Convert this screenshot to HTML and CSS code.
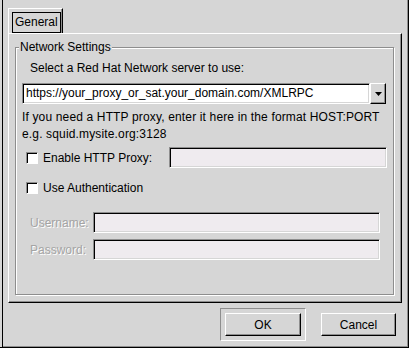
FILE: index.html
```html
<!DOCTYPE html>
<html lang="en">
<head>
  <meta charset="UTF-8">
  <title>Network Settings</title>
  <link rel="stylesheet" href="styles.css">
</head>
<body>
  <div class="dialog">
    <div class="notebook">
      <div class="tabs">
        <div class="tab"><span class="tab-focus">General</span></div>
      </div>
      <div class="page">
        <div class="frame">
          <span class="frame-label">Network Settings</span>

          <div class="select-label">Select a Red Hat Network server to use:</div>
          <div class="combo">
            <div class="entry combo-entry">https://your_proxy_or_sat.your_domain.com/XMLRPC</div>
            <div class="combo-btn">
              <svg width="9" height="6" viewBox="0 0 9 6"><path d="M1 1 H8 L4.5 5 Z" fill="#000"/></svg>
            </div>
          </div>

          <div class="info">
            <div>If you need a HTTP proxy, enter it here in the format HOST:PORT</div>
            <div>e.g. squid.mysite.org:3128</div>
          </div>

          <div class="row proxy-row">
            <span class="check"></span>
            <span class="check-text">Enable HTTP Proxy:</span>
            <div class="entry disabled proxy-entry"></div>
          </div>

          <div class="row auth-row">
            <span class="check"></span>
            <span class="check-text">Use Authentication</span>
          </div>

          <div class="row cred-row first">
            <span class="cred-label">Username:</span>
            <div class="entry disabled cred-entry"></div>
          </div>
          <div class="row cred-row">
            <span class="cred-label">Password:</span>
            <div class="entry disabled cred-entry"></div>
          </div>
        </div>
      </div>
    </div>

    <div class="buttons">
      <div class="default-frame"><button class="btn">OK</button></div>
      <button class="btn cancel">Cancel</button>
    </div>
  </div>
</body>
</html>
```

FILE: styles.css
```css
* {
  box-sizing: border-box;
}

body {
  margin: 0;
  background: #d6d6d6;
  font-family: 'Liberation Sans', Arial, sans-serif;
  font-size: 12px;
  color: #000;
}

.dialog {
  width: 409px;
  height: 348px;
  background: #d6d6d6;
  border-right: 1px solid #000;
  border-bottom: 1px solid #000;
  box-shadow: inset 2px 0 0 #d6d6d6, inset 3px 0 0 #000, inset -1px -1px 0 #8e8e8e;
  padding: 8px 0 0 8px;
}

.notebook {
  width: 394px;
}

.tabs {
  display: flex;
  height: 25px;
}

.tab {
  width: 55px;
  height: 25px;
  border-top: 1px solid #fff;
  border-left: 1px solid #fff;
  border-right: 1px solid #000;
  box-shadow: inset -1px 0 0 #8e8e8e;
  padding: 3px 0 0 3px;
}

.tab-focus {
  display: block;
  width: 49px;
  height: 21px;
  border: 1px solid #000;
  padding: 2px 0 0 2px;
  line-height: 14px;
}

.page {
  height: 270px;
  border-top: 1px solid #fff;
  border-left: 1px solid #fff;
  border-right: 1px solid #000;
  border-bottom: 1px solid #000;
  box-shadow: inset -1px -1px 0 #8e8e8e;
  padding: 13px 0 0 6px;
}

.frame {
  position: relative;
  width: 379px;
  height: 248px;
  border: 1px solid #8e8e8e;
  box-shadow: inset 1px 1px 0 #fff, 1px 1px 0 #fff;
  padding: 13px 6px 0 6px;
}

.frame-label {
  position: absolute;
  left: 3px;
  top: -8px;
  background: #d6d6d6;
  padding: 0 1px;
  line-height: 14px;
}

.select-label {
  margin-left: 8px;
  line-height: 14px;
}

.combo {
  display: flex;
  margin-top: 8px;
  width: 364px;
  height: 21px;
}

.entry {
  height: 21px;
  border: 1px solid;
  border-color: #8e8e8e #fff #fff #8e8e8e;
  box-shadow: inset 1px 1px 0 #000, inset -1px -1px 0 #d6d6d6;
  background: #fff;
  line-height: 19px;
  padding-left: 3px;
}

.entry.disabled {
  background: #efebef;
}

.combo-entry {
  flex: 1;
}

.combo-btn {
  width: 16px;
  height: 21px;
  border: 1px solid;
  border-color: #fff #000 #000 #fff;
  box-shadow: inset -1px -1px 0 #8e8e8e;
  display: flex;
  align-items: center;
  justify-content: center;
}

.info {
  margin-top: 5px;
  line-height: 17px;
  letter-spacing: 0.15px;
}

.row {
  display: flex;
  align-items: center;
  height: 21px;
}

.proxy-row {
  margin-top: 4px;
  padding-left: 4px;
}

.check {
  width: 12px;
  height: 12px;
  border: 1px solid;
  border-color: #8e8e8e #fff #fff #8e8e8e;
  box-shadow: inset 1px 1px 0 #000;
  background: #fff;
}

.check-text {
  margin-left: 5px;
}

.proxy-entry {
  margin-left: auto;
  width: 218px;
}

.auth-row {
  margin-top: 9px;
  padding-left: 4px;
}

.cred-row {
  margin-top: 6px;
}

.cred-row.first {
  margin-top: 14px;
}

.cred-label {
  width: 71px;
  padding-left: 8px;
  color: #a4a4a4;
  text-shadow: 1px 1px 0 #fff;
}

.cred-entry {
  width: 287px;
}

.buttons {
  display: flex;
  justify-content: flex-end;
  align-items: center;
  gap: 15px;
  margin-top: 5px;
  padding-right: 12px;
}

.default-frame {
  width: 86px;
  height: 33px;
  border: 1px solid;
  border-color: #8e8e8e #fff #fff #8e8e8e;
  padding: 4px;
}

.btn {
  font-family: 'Liberation Sans', Arial, sans-serif;
  font-size: 12px;
  width: 76px;
  height: 23px;
  margin: 0;
  padding: 0;
  background: #d6d6d6;
  color: #000;
  border: 1px solid;
  border-color: #fff #000 #000 #fff;
  box-shadow: inset -1px -1px 0 #8e8e8e;
}

.cancel {
  width: 75px;
}
```
